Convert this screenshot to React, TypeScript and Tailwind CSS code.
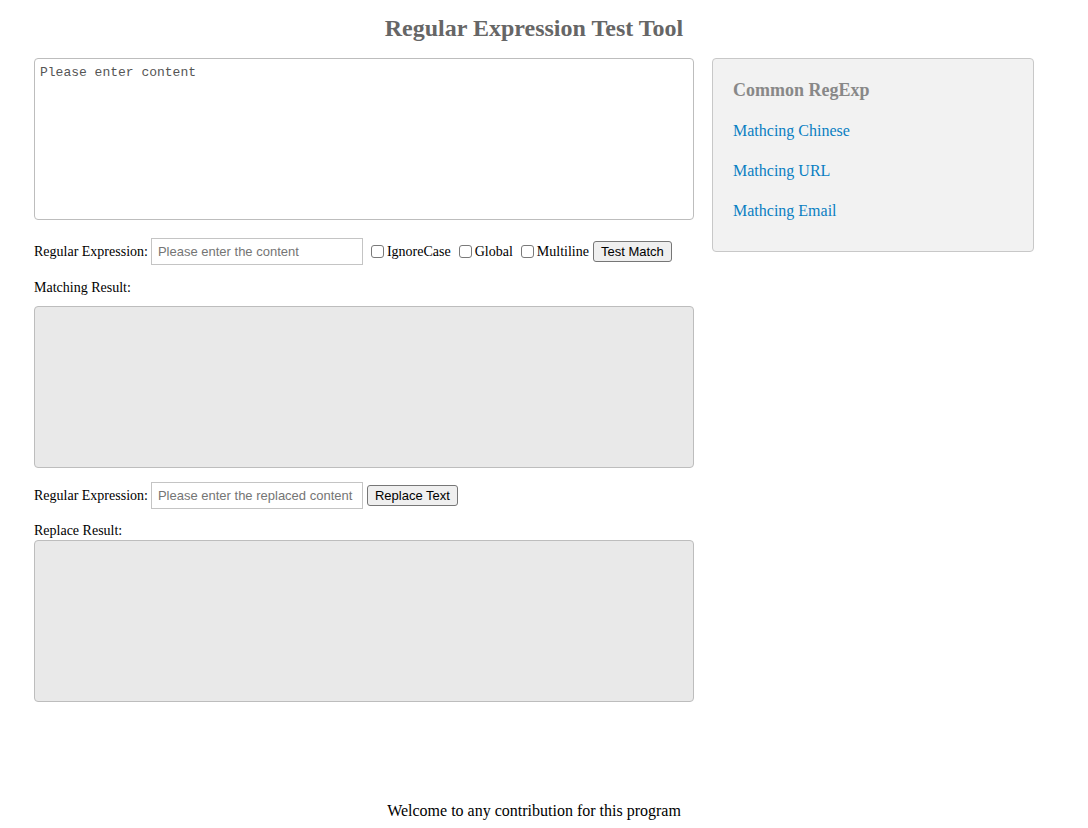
import React, { FC } from "react";

const serif = { fontFamily: '"Liberation Serif", "Times New Roman", serif' };

const Check: FC<{ label: string }> = ({ label }) => (
    <label className="flex items-center ml-[8px]">
        <input
            type="checkbox"
            className="appearance-none w-[13px] h-[13px] border border-[#7a7a7a] rounded-[3px] bg-white"
        />
        <span className="ml-[3px]">{label}</span>
    </label>
);

const Button: FC<{ text: string }> = ({ text }) => (
    <button className="ml-[4px] h-[21px] px-[7px] border border-[#767676] rounded-[3px] bg-[#efefef] text-[13px] leading-[19px] text-black font-['Liberation_Sans',Arial,sans-serif]">
        {text}
    </button>
);

const TextInput: FC<{ placeholder: string }> = ({ placeholder }) => (
    <input
        type="text"
        placeholder={placeholder}
        className="ml-[3px] w-[212px] h-[27px] border border-[#c4c4c4] px-[6px] text-[13px] placeholder:text-[#757575] font-['Liberation_Sans',Arial,sans-serif] outline-none"
    />
);

const links = ["Mathcing Chinese", "Mathcing URL", "Mathcing Email"];

export default function App() {
    return (
        <div className="w-[1068px] bg-white text-black text-[14px]" style={serif}>
            <h1 className="mt-[14px] mb-[16px] text-center text-[24px] leading-[28px] font-bold text-[#666666]">
                Regular Expression Test Tool
            </h1>
            <div className="flex items-start pl-[34px] gap-[18px]">
                <div className="flex flex-col w-[660px]">
                    <textarea
                        placeholder="Please enter content"
                        className="h-[162px] w-full border border-[#bdbdbd] rounded-[4px] px-[5px] pt-[6px] pb-[5px] text-[13px] leading-[15px] resize-none placeholder:text-[#555555] font-['Liberation_Mono','Courier_New',monospace] outline-none"
                    />
                    <div className="flex items-center mt-[18px] h-[27px]">
                        <span>Regular Expression:</span>
                        <TextInput placeholder="Please enter the content" />
                        <Check label="IgnoreCase" />
                        <Check label="Global" />
                        <Check label="Multiline" />
                        <Button text="Test Match" />
                    </div>
                    <div className="mt-[15px] mb-[10px] leading-[16px]">Matching Result:</div>
                    <div className="h-[162px] bg-[#e9e9e9] border border-[#bdbdbd] rounded-[4px]"></div>
                    <div className="flex items-center mt-[14px] h-[27px]">
                        <span>Regular Expression:</span>
                        <TextInput placeholder="Please enter the replaced content" />
                        <Button text="Replace Text" />
                    </div>
                    <div className="mt-[14px] mb-[1px] leading-[16px]">Replace Result:</div>
                    <div className="h-[162px] bg-[#e9e9e9] border border-[#bdbdbd] rounded-[4px]"></div>
                </div>
                <div className="flex flex-col w-[322px] bg-[#f2f2f2] border border-[#c8c8c8] rounded-[4px] pl-[20px] pt-[21px] pb-[31px]">
                    <div className="text-[18px] leading-[20px] font-bold text-[#888888]">Common RegExp</div>
                    {links.map((l) => (
                        <a key={l} href="#" className="mt-[22px] text-[16px] leading-[18px] text-[#0a7fc2]">
                            {l}
                        </a>
                    ))}
                </div>
            </div>
            <div className="mt-[100px] pb-[8px] text-center text-[16px] leading-[18px]">
                Welcome to any contribution for this program
            </div>
        </div>
    );
}
